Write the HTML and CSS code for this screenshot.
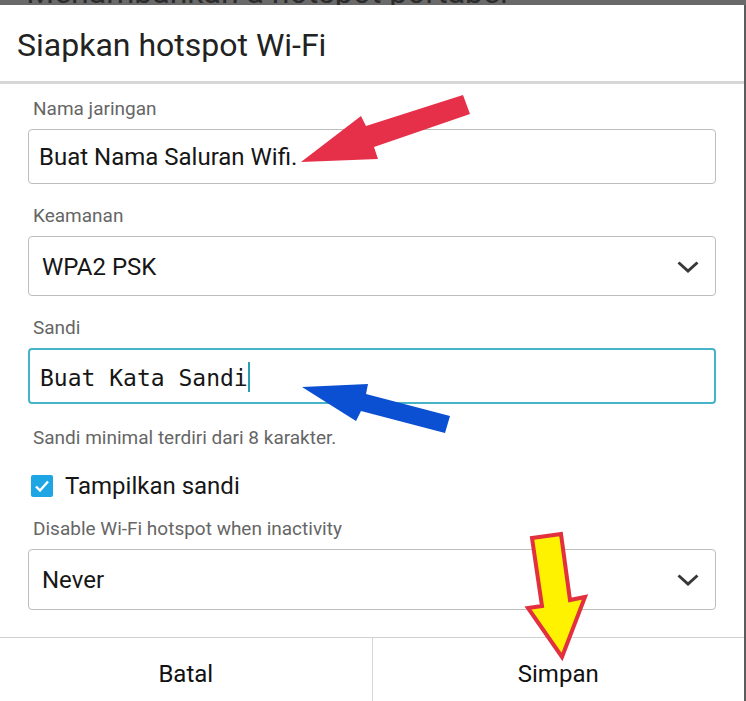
FILE: index.html
```html
<!DOCTYPE html>
<html lang="id">
<head>
  <meta charset="UTF-8" />
  <title>Siapkan hotspot Wi-Fi</title>
  <link rel="stylesheet" href="styles.css">
</head>
<body>
  <div class="backdrop-bar">
    <span class="backdrop-text">&lt; Menambahkan a hotspot portabel</span>
  </div>

  <div class="dialog">
    <h1 class="dialog-title">Siapkan hotspot Wi-Fi</h1>

    <div class="dialog-body">
      <div class="field">
        <div class="field-label">Nama jaringan</div>
        <div class="box box-input">Buat Nama Saluran Wifi.</div>
      </div>

      <div class="field">
        <div class="field-label">Keamanan</div>
        <div class="box box-select">
          <span>WPA2 PSK</span>
          <svg class="chevron" width="22" height="12" viewBox="0 0 22 12"><path d="M1.5 1.5 L11 10 L20.5 1.5" fill="none" stroke="#383838" stroke-width="3"/></svg>
        </div>
      </div>

      <div class="field field-password">
        <div class="field-label">Sandi</div>
        <div class="box box-focus">Buat Kata Sandi<span class="caret"></span></div>
      </div>

      <p class="hint">Sandi minimal terdiri dari 8 karakter.</p>

      <label class="check-row">
        <span class="checkbox">
          <svg width="16" height="14" viewBox="0 0 16 14"><path d="M2 7.5 L6 11.5 L14 2.5" fill="none" stroke="#fff" stroke-width="2.4"/></svg>
        </span>
        Tampilkan sandi
      </label>

      <div class="field field-last">
        <div class="field-label">Disable Wi-Fi hotspot when inactivity</div>
        <div class="box box-select box-tall">
          <span>Never</span>
          <svg class="chevron" width="22" height="12" viewBox="0 0 22 12"><path d="M1.5 1.5 L11 10 L20.5 1.5" fill="none" stroke="#383838" stroke-width="3"/></svg>
        </div>
      </div>
    </div>

    <div class="dialog-actions">
      <div class="action">Batal</div>
      <div class="action action-primary">Simpan</div>
    </div>
  </div>

  <!-- annotation arrows drawn over the screenshot -->
  <svg class="marks" width="746" height="701" viewBox="0 0 746 701">
    <path d="M301 162 L361 116 L366 126 L463 95 L470 114 L374 147 L378 159 Z" fill="#e6304a"/>
    <path d="M302 387 L368 384 L366 394 L450 416 L445 433 L361 411 L356 421 Z" fill="#0b4fd2"/>
    <path d="M532 538 L561 534 L570 600 L585 597 L562 657 L528 608 L542 606 Z" fill="#fff200" stroke="#e2303f" stroke-width="4" stroke-linejoin="miter"/>
  </svg>
</body>
</html>
```

FILE: styles.css
```css
body {
  margin: 0;
  background: #5c5c5c;
  font-family: Roboto, "Noto Sans", sans-serif;
  position: relative;
  overflow: hidden;
  height: 701px;
}

.backdrop-bar {
  height: 5px;
  overflow: hidden;
  background: #6a6a6a;
  padding-left: 2px;
}

.backdrop-text {
  display: block;
  margin-top: -24px;
  font-size: 32px;
  line-height: 32px;
  color: #2c2c2c;
  white-space: nowrap;
}

.dialog {
  width: 744px;
  background: #fff;
  height: 700px;
}

.dialog-title {
  margin: 0;
  padding: 20px 17px 16px;
  font-size: 32px;
  line-height: 40px;
  font-weight: normal;
  color: #222;
  border-bottom: 3px solid #d7d7d7;
}

.dialog-body {
  padding: 14px 28px 27px;
}

.field {
  margin-bottom: 21px;
}

.field-last {
  margin-bottom: 0;
}

.field-label {
  font-size: 19px;
  line-height: 22px;
  color: #666;
  margin: 0 0 9px 5px;
}

.box {
  box-sizing: border-box;
  border: 1px solid #bdbdbd;
  border-radius: 4px;
  font-size: 24px;
  color: #161616;
}

.box-input {
  height: 55px;
  line-height: 53px;
  padding: 1px 10px 0;
}

.box-select {
  height: 60px;
  display: flex;
  align-items: center;
  justify-content: space-between;
  padding: 1px 16px 0 13px;
}

.box-tall {
  height: 61px;
}

.chevron {
  display: block;
}

.field-password {
  margin-bottom: 0;
}

.box-focus {
  height: 56px;
  border: 2px solid #45b4c6;
  line-height: 52px;
  padding: 2px 10px 0;
  font-family: "DejaVu Sans Mono", monospace;
  font-size: 23px;
  white-space: pre;
}

.caret {
  display: inline-block;
  width: 2px;
  height: 30px;
  background: #2a9fb3;
  vertical-align: -6px;
}

.hint {
  margin: 23px 0 0 5px;
  font-size: 19px;
  line-height: 22px;
  color: #666;
}

.check-row {
  display: flex;
  align-items: center;
  gap: 12px;
  margin: 22px 0 17px 3px;
  height: 30px;
  font-size: 24px;
  color: #161616;
}

.checkbox {
  width: 22px;
  height: 22px;
  border-radius: 2px;
  background: #1ea6e4;
  display: flex;
  align-items: center;
  justify-content: center;
}

.dialog-actions {
  display: flex;
  border-top: 1px solid #d0d0d0;
  height: 70px;
}

.action {
  flex: 1;
  text-align: center;
  font-size: 24px;
  line-height: 64px;
  padding-top: 4px;
  color: #111;
}

.action-primary {
  border-left: 1px solid #d6d6d6;
}

.marks {
  position: absolute;
  top: 0;
  left: 0;
  pointer-events: none;
}
```
